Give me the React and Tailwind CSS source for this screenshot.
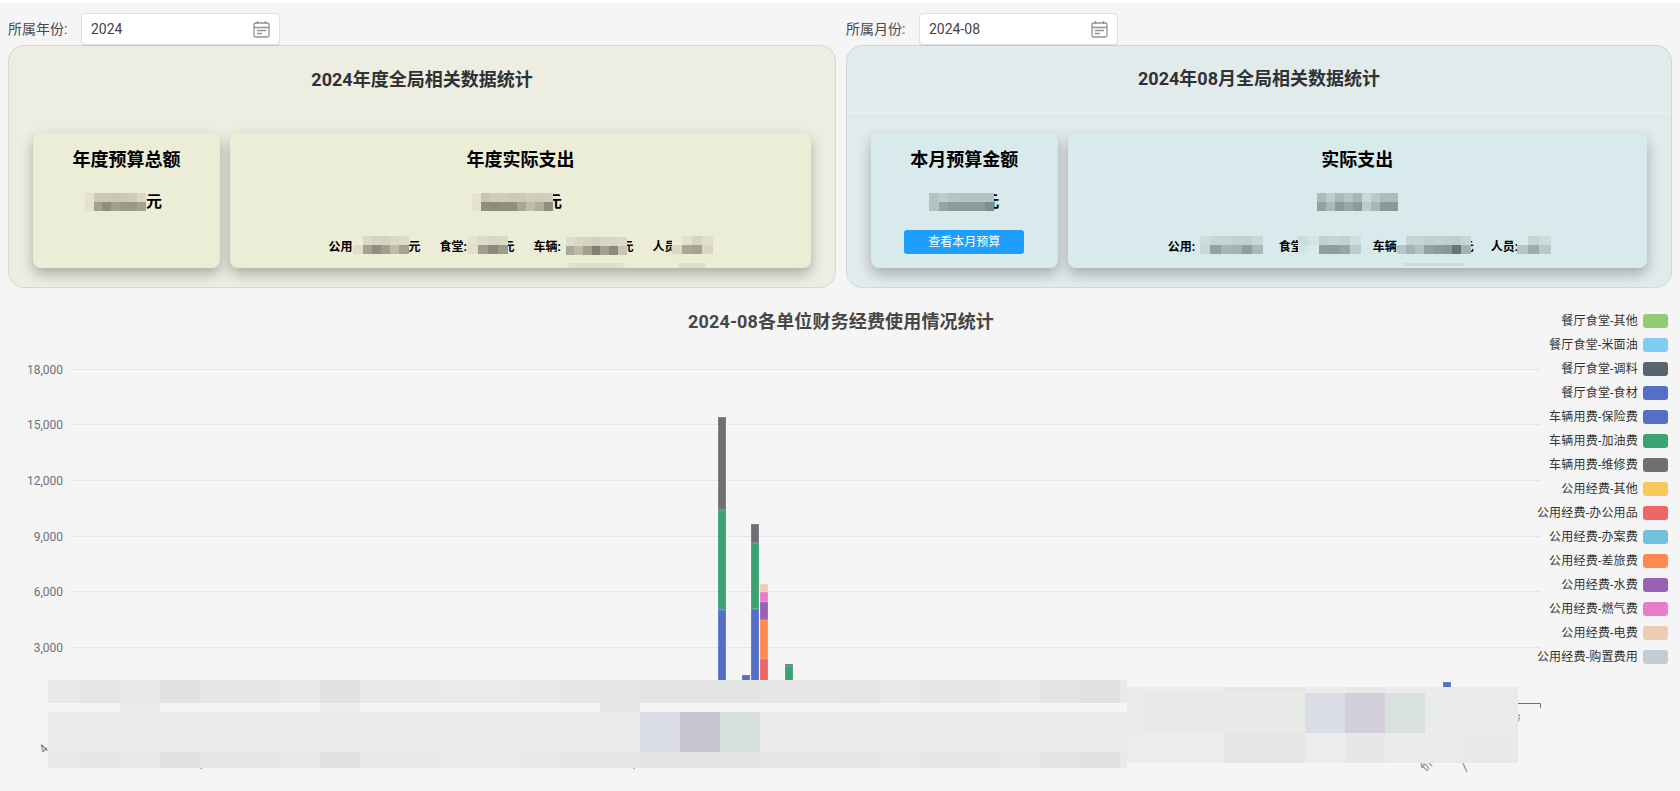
import React from "react";

// echarts legend, top to bottom
const legend = [
  { name: "餐厅食堂-其他", color: "bg-[#91cc75]" },
  { name: "餐厅食堂-米面油", color: "bg-[#7fcdf5]" },
  { name: "餐厅食堂-调料", color: "bg-[#546570]" },
  { name: "餐厅食堂-食材", color: "bg-[#5470c6]" },
  { name: "车辆用费-保险费", color: "bg-[#5470c6]" },
  { name: "车辆用费-加油费", color: "bg-[#3ba272]" },
  { name: "车辆用费-维修费", color: "bg-[#6e7074]" },
  { name: "公用经费-其他", color: "bg-[#fac858]" },
  { name: "公用经费-办公用品", color: "bg-[#ee6666]" },
  { name: "公用经费-办案费", color: "bg-[#73c0de]" },
  { name: "公用经费-差旅费", color: "bg-[#ff8a50]" },
  { name: "公用经费-水费", color: "bg-[#9a60b4]" },
  { name: "公用经费-燃气费", color: "bg-[#ea7ccc]" },
  { name: "公用经费-电费", color: "bg-[#eeccb4]" },
  { name: "公用经费-购置费用", color: "bg-[#c4ccd3]" },
];

const yTicks = [
  { label: "18,000", y: 81.5 },
  { label: "15,000", y: 136.5 },
  { label: "12,000", y: 192.5 },
  { label: "9,000", y: 248.5 },
  { label: "6,000", y: 303.5 },
  { label: "3,000", y: 359.5 },
];

// stacked bars, y values relative to the chart box
const bars = [
  { x: 718, parts: [[129, 93, "#6e7074"], [222, 100, "#3ba272"], [322, 93, "#5470c6"]] },
  { x: 742, parts: [[387, 28, "#5470c6"]] },
  { x: 751, parts: [[236, 19, "#6e7074"], [255, 66, "#3ba272"], [321, 94, "#5470c6"]] },
  {
    x: 760,
    parts: [
      [296, 8, "#eeccb4"],
      [304, 10, "#ea7ccc"],
      [314, 18, "#9a60b4"],
      [332, 39, "#ff8a50"],
      [371, 44, "#ee6666"],
    ],
  },
  { x: 785, parts: [[376, 2, "#6e7074"], [378, 37, "#3ba272"]] },
  { x: 1443, parts: [[394, 21, "#5470c6"]] },
];

const Mosaic = ({ rows, className = "" }) => (
  <div className={`relative z-10 flex flex-col shrink-0 ${className}`}>
    {rows.map((row, i) => (
      <div key={i} className="flex flex-1">
        {row.map((cell, j) => (
          <div key={j} className={`flex-1 ${cell}`} />
        ))}
      </div>
    ))}
  </div>
);

const CalendarIcon = () => (
  <svg width="17" height="18" viewBox="0 0 17 18" fill="none" stroke="#909399" strokeWidth="1.3">
    <rect x="1" y="3" width="15" height="14" rx="1.5" />
    <path d="M1 7.5h15M4.5 1v3M12.5 1v3M4 10.5h9M4 13.5h5" />
  </svg>
);

const DateField = ({ label, value }) => (
  <div className="flex items-center h-8">
    <label className="w-[73px] text-sm text-[#4a4a4a]">{label}</label>
    <div className="w-[199px] h-8 flex items-center justify-between pl-[9px] pr-[9px] bg-white rounded border border-[#dcdfe6] shadow-[0_1px_1px_rgba(0,0,0,0.06)]">
      <span className="text-sm text-[#444444]">{value}</span>
      <CalendarIcon />
    </div>
  </div>
);

const Card = ({ bg, title, children }) => (
  <div className={`relative h-[135px] rounded-lg flex flex-col items-center pt-[15px] shadow-[0_6px_14px_rgba(0,0,0,0.28)] ${bg}`}>
    <div className="text-lg leading-6 font-bold text-black">{title}</div>
    {children}
  </div>
);

const Amount = ({ children, className = "" }) => (
  <div className={`mt-[18px] h-6 flex items-center text-base font-bold text-black ${className}`}>{children}</div>
);

const SubRow = ({ children, className = "" }) => (
  <div className={`mt-[25px] h-4 flex items-center text-xs font-bold text-black ${className}`}>{children}</div>
);

const SubItem = ({ label, labelClass, rows, mosaicClass, className = "" }) => (
  <div className={`flex items-center ${className}`}>
    <span className={`whitespace-nowrap ${labelClass}`}>{label}</span>
    <Mosaic rows={rows} className={`h-[18px] -translate-y-[2px] ${mosaicClass}`} />
  </div>
);

const Panel = ({ bg, title, divider = "", children }) => (
  <div className={`h-[243px] rounded-2xl border border-[#d5d7d3] ${bg}`}>
    <div className={`h-[67px] flex items-center justify-center text-lg font-bold text-[#303133] ${divider}`}>{title}</div>
    <div className="px-6 pt-5">
      <div className="flex -mx-[5px]">{children}</div>
    </div>
  </div>
);

// pixelated cover over the x axis labels
const coverTop = [
  ["w-[32px]", "bg-[#e9e9e9]"], ["w-[40px]", "bg-[#e5e5e5]"], ["w-[40px]", "bg-[#e6e9e7]"], ["w-[40px]", "bg-[#e2e2e3]"],
  ["w-[80px]", "bg-[#e6e6e6]"], ["w-[40px]", "bg-[#e9e9e9]"], ["w-[40px]", "bg-[#e1e2e3]"], ["w-[80px]", "bg-[#e9e9e9]"],
  ["w-[80px]", "bg-[#eaeaea]"], ["w-[40px]", "bg-[#e8e8e8]"], ["w-[80px]", "bg-[#e6e6e6]"], ["w-[120px]", "bg-[#e4e4e5]"],
  ["w-[80px]", "bg-[#e7e7e7]"], ["w-[40px]", "bg-[#e5e5e5]"], ["w-[40px]", "bg-[#e8e8e8]"], ["w-[80px]", "bg-[#e6e6e6]"],
  ["w-[40px]", "bg-[#e9e9e9]"], ["w-[40px]", "bg-[#e4e4e4]"], ["w-[40px]", "bg-[#e1e1e2]"], ["w-[7px]", "bg-[#e9e9e9]"],
];
const coverGap = [
  ["w-[72px]", "bg-[#f4f4f4]"], ["w-[40px]", "bg-[#eaeaea]"], ["w-[160px]", "bg-[#f4f4f4]"], ["w-[40px]", "bg-[#eeeeee]"],
  ["w-[240px]", "bg-[#f5f5f5]"], ["w-[40px]", "bg-[#e6e6e6]"], ["w-[487px]", "bg-[#f5f5f5]"],
];
const coverMid = [
  ["w-[112px]", "bg-[#ebebeb]"], ["w-[400px]", "bg-[#eaeaea]"], ["w-[80px]", "bg-[#eaece9]"],
  ["w-[40px]", "bg-[#d9dce7]"], ["w-[40px]", "bg-[#cac5d3]"], ["w-[40px]", "bg-[#d7e1dc]"], ["w-[120px]", "bg-[#eaeaea]"],
  ["w-[40px]", "bg-[#eaece9]"], ["w-[207px]", "bg-[#ebebeb]"],
];
const rightTop = [
  ["w-[97px]", "bg-[#ececec]"], ["w-[81px]", "bg-[#e6e6e6]"], ["w-[40px]", "bg-[#ececec]"], ["w-[40px]", "bg-[#e8e8e8]"],
  ["w-[133px]", "bg-[#ebebeb]"],
];
const rightMid = [
  ["w-[17px]", "bg-[#ebebeb]"], ["w-[80px]", "bg-[#e8e8e8]"], ["w-[81px]", "bg-[#e8eae8]"], ["w-[40px]", "bg-[#dadde6]"],
  ["w-[40px]", "bg-[#d2cfdb]"], ["w-[40px]", "bg-[#d8e1dd]"], ["w-[40px]", "bg-[#eaecea]"], ["w-[53px]", "bg-[#ebebeb]"],
];
const rightBottom = [
  ["w-[97px]", "bg-[#ececec]"], ["w-[81px]", "bg-[#e5e5e5]"], ["w-[40px]", "bg-[#ececec]"], ["w-[40px]", "bg-[#e7e7e7]"],
  ["w-[80px]", "bg-[#eaeaea]"], ["w-[53px]", "bg-[#e9e9e9]"],
];

const CoverRow = ({ cells, className }) => (
  <div className={`flex ${className}`}>
    {cells.map(([w, bg], i) => (
      <div key={i} className={`${w} ${bg}`} />
    ))}
  </div>
);

const Chart = () => (
  <div className="relative h-[503px]">
    <svg width="1680" height="503" className="block">
      <text x="841" y="40" textAnchor="middle" fontSize="18" fontWeight="bold" fill="#464646" letterSpacing="0.15">
        2024-08各单位财务经费使用情况统计
      </text>
      {yTicks.map((t) => (
        <g key={t.label}>
          <line x1="71" x2="1540" y1={t.y} y2={t.y} stroke="#e0e6f1" />
          <text x="63" y={t.y + 4} textAnchor="end" fontSize="12" fill="#6e7079">
            {t.label}
          </text>
        </g>
      ))}
      <path d="M71 415.5H1540.5V420" fill="none" stroke="#6e7079" />
      {bars.map((b) =>
        b.parts.map(([y, h, fill]) => (
          <rect key={`${b.x}-${y}`} x={b.x} y={y} width="8" height={h} fill={fill} stroke="#ffffff" strokeOpacity="0.2" />
        ))
      )}
      {/* tails of the rotated axis labels that stick out of the cover */}
      <text transform="translate(44 466) rotate(-45)" fontSize="12" fill="#6e7079">4</text>
      <text transform="translate(1514 437) rotate(-45)" fontSize="12" fill="#6e7079">参</text>
      <text transform="translate(1425 484) rotate(-45)" fontSize="12" fill="#6e7079">价</text>
      <text transform="translate(1466 484) rotate(-45)" fontSize="12" fill="#6e7079">/</text>
      <path d="M201 479v2M634 479v2" stroke="#6e7079" />
    </svg>

    <div className="absolute top-[26px] right-[12px] flex flex-col items-end gap-[10px]">
      {legend.map((item) => (
        <div key={item.name} className="flex items-center h-[14px] gap-[5px] text-xs tracking-[0.2px] text-[#333333]">
          <span>{item.name}</span>
          <span className={`w-[25px] h-[14px] rounded-[3px] ${item.color}`} />
        </div>
      ))}
    </div>

    <div className="absolute left-[48px] top-[392px] w-[1079px]">
      <CoverRow cells={coverTop} className="h-[23px]" />
      <CoverRow cells={coverGap} className="h-[9px]" />
      <CoverRow cells={coverMid} className="h-[40px]" />
      <CoverRow cells={coverTop} className="h-[16px]" />
    </div>
    <div className="absolute left-[1127px] top-[399px] w-[391px]">
      <CoverRow cells={rightTop} className="h-[6px]" />
      <CoverRow cells={rightMid} className="h-[40px]" />
      <CoverRow cells={rightBottom} className="h-[30px]" />
    </div>
  </div>
);

export default function App() {
  return (
    <div className="h-screen overflow-hidden border-t-[3px] border-white bg-[#f5f5f5] font-[Roboto,'Noto_Sans_CJK_SC',sans-serif]">
      <div className="grid grid-cols-[828px_826px] gap-[10px] px-2 pt-[10px]">
        <div>
          <DateField label="所属年份:" value="2024" />
          <Panel bg="bg-[#edede2]" title="2024年度全局相关数据统计">
            <div className="w-1/4 px-[5px]">
              <Card bg="bg-[#ecedd7]" title="年度预算总额">
                <Amount className="-ml-[6px]">
                  <Mosaic
                    className="w-[61px] h-[18px]"
                    rows={[
                      ["bg-[#e2e2cf]", "bg-[#cacab6]", "bg-[#c9c9b5]", "bg-[#c8c8b4]", "bg-[#cacab6]", "bg-[#cdcdba]", "bg-[#d9d9c5]"],
                      ["bg-[#e2e2cf]", "bg-[#a3a394]", "bg-[#8f8f80]", "bg-[#a0a090]", "bg-[#9a9a8b]", "bg-[#9a9a8b]", "bg-[#a2a292]"],
                    ]}
                  />
                  <span>元</span>
                </Amount>
              </Card>
            </div>
            <div className="w-3/4 px-[5px]">
              <Card bg="bg-[#ecedd7]" title="年度实际支出">
                <Amount className="-ml-[7px]">
                  <Mosaic
                    className="w-[81px] h-[18px]"
                    rows={[
                      ["bg-[#e4e4d1]", "bg-[#c6c6b2]", "bg-[#cdcdb9]", "bg-[#cdcdb9]", "bg-[#cacab6]", "bg-[#cbcbb7]", "bg-[#cfcfbb]", "bg-[#cdcdb9]", "bg-[#d0d0bc]"],
                      ["bg-[#e4e4d1]", "bg-[#8f8f80]", "bg-[#8b8b7d]", "bg-[#8f8f80]", "bg-[#8f8f80]", "bg-[#a8a898]", "bg-[#bdbdaa]", "bg-[#adad9c]", "bg-[#8d8d7e]"],
                    ]}
                  />
                  <span className="-ml-[7px]">元</span>
                </Amount>
                <SubRow className="gap-[19px]">
                  <SubItem
                    label="公用"
                    labelClass="w-[25px]"
                    mosaicClass="w-[55px]"
                    rows={[
                      ["bg-[#ecedd7]", "bg-[#dadac6]", "bg-[#d5d5c1]", "bg-[#d3d3bf]", "bg-[#d9d9c5]", "bg-[#dcdcc8]"],
                      ["bg-[#dedecb]", "bg-[#a3a393]", "bg-[#8f8f80]", "bg-[#a0a090]", "bg-[#bcbca9]", "bg-[#a3a393]"],
                    ]}
                  />
                  <span className="-ml-[19px]">元</span>
                  <SubItem
                    label="食堂:"
                    labelClass="w-[28px]"
                    mosaicClass="w-[41px]"
                    rows={[
                      ["bg-[#e3e3d0]", "bg-[#dcdcc8]", "bg-[#d6d6c2]", "bg-[#dadac6]"],
                      ["bg-[#e0e0cc]", "bg-[#9e9e8e]", "bg-[#8b8b7d]", "bg-[#9c9c8c]"],
                    ]}
                  />
                  <span className="-ml-[25px]">元</span>
                  <SubItem
                    label="车辆:"
                    labelClass="w-[32px]"
                    mosaicClass="w-[61px] mt-[2px]"
                    rows={[
                      ["bg-[#dedecb]", "bg-[#d8d8c4]", "bg-[#d4d4c0]", "bg-[#d0d0bc]", "bg-[#d6d6c2]", "bg-[#d6d6c2]", "bg-[#d9d9c5]"],
                      ["bg-[#a9a999]", "bg-[#bbbba8]", "bg-[#a0a090]", "bg-[#7f7f72]", "bg-[#a0a090]", "bg-[#8a8a7c]", "bg-[#c5c5b1]"],
                    ]}
                  />
                  <span className="-ml-[24px]">元</span>
                  <SubItem
                    label="人员"
                    labelClass="w-[19px]"
                    mosaicClass="w-[41px]"
                    rows={[
                      ["bg-[#ecedd7]", "bg-[#e2e2cf]", "bg-[#d5d5c1]", "bg-[#dedecb]"],
                      ["bg-[#d8d8c4]", "bg-[#a9a999]", "bg-[#a3a393]", "bg-[#d6d6c2]"],
                    ]}
                  />
                </SubRow>
                <div className="absolute bottom-0 left-[337px] w-[58px] h-[5px] rounded-b-2xl bg-[#dfdfcc]" />
                <div className="absolute bottom-0 left-[447px] w-[30px] h-[5px] rounded-b-2xl bg-[#dfdfcc]" />
              </Card>
            </div>
          </Panel>
        </div>

        <div>
          <DateField label="所属月份:" value="2024-08" />
          <Panel bg="bg-[#e2ebec]" divider="border-b border-[#ebf1f2]" title="2024年08月全局相关数据统计">
            <div className="w-1/4 px-[5px]">
              <Card bg="bg-[#d8eaec]" title="本月预算金额">
                <Amount>
                  <Mosaic
                    className="w-[65px] h-[18px]"
                    rows={[
                      ["bg-[#b3c3c3]", "bg-[#bdcccc]", "bg-[#b5c5c5]", "bg-[#b3c3c3]", "bg-[#b3c3c3]", "bg-[#b3c3c3]", "bg-[#b3c3c3]"],
                      ["bg-[#b3c3c3]", "bg-[#95a3a3]", "bg-[#8d9a9a]", "bg-[#8d9a9a]", "bg-[#8d9a9a]", "bg-[#8d9a9a]", "bg-[#7f8c8c]"],
                    ]}
                  />
                  <span className="-ml-[11px]">元</span>
                </Amount>
                <button className="mt-4 w-[120px] h-6 rounded-[3px] bg-[#1e9fff] text-xs text-white">查看本月预算</button>
              </Card>
            </div>
            <div className="w-3/4 px-[5px]">
              <Card bg="bg-[#d8eaec]" title="实际支出">
                <Amount>
                  <Mosaic
                    className="w-[81px] h-[18px]"
                    rows={[
                      ["bg-[#adbdbd]", "bg-[#bccbcb]", "bg-[#a9b9b9]", "bg-[#b6c6c6]", "bg-[#a7b7b7]", "bg-[#c8d8d9]", "bg-[#b9c9c9]", "bg-[#acbcbc]", "bg-[#acbcbc]"],
                      ["bg-[#93a1a1]", "bg-[#aab9b9]", "bg-[#8c9999]", "bg-[#99a7a7]", "bg-[#8d9a9a]", "bg-[#bccbcb]", "bg-[#a7b6b6]", "bg-[#8b9898]", "bg-[#8b9898]"],
                    ]}
                  />
                </Amount>
                <SubRow className="ml-[4px]">
                  <SubItem
                    label="公用:"
                    labelClass="w-[32px]"
                    mosaicClass="w-[63px]"
                    rows={[
                      ["bg-[#cbdcdd]", "bg-[#c5d6d7]", "bg-[#c5d6d7]", "bg-[#c0d1d2]", "bg-[#bfd0d1]", "bg-[#c8d9da]"],
                      ["bg-[#c6d7d8]", "bg-[#93a1a1]", "bg-[#a6b5b5]", "bg-[#a3b2b2]", "bg-[#8f9d9d]", "bg-[#a9b8b8]"],
                    ]}
                  />
                  <SubItem
                    className="ml-[16px]"
                    label="食堂"
                    labelClass="w-[19px]"
                    mosaicClass="w-[63px]"
                    rows={[
                      ["bg-[#cbdcdd]", "bg-[#d4e4e5]", "bg-[#bfd0d1]", "bg-[#c4d5d6]", "bg-[#c0d1d2]", "bg-[#cfdfe0]"],
                      ["bg-[#d4e4e5]", "bg-[#d8eaec]", "bg-[#8f9d9d]", "bg-[#8e9c9c]", "bg-[#96a4a4]", "bg-[#bccbcb]"],
                    ]}
                  />
                  <SubItem
                    className="ml-[12px]"
                    label="车辆"
                    labelClass="w-[24px]"
                    mosaicClass="w-[74px]"
                    rows={[
                      ["bg-[#d8eaec]", "bg-[#c3d4d5]", "bg-[#c5d6d7]", "bg-[#bfd0d1]", "bg-[#c0d1d2]", "bg-[#bdcece]", "bg-[#bdcece]", "bg-[#c5d6d7]"],
                      ["bg-[#b5c5c5]", "bg-[#a4b3b3]", "bg-[#b3c2c2]", "bg-[#93a1a1]", "bg-[#8d9a9a]", "bg-[#8a9797]", "bg-[#697575]", "bg-[#a4b3b3]"],
                    ]}
                  />
                  <span className="-ml-[9px]">元</span>
                  <SubItem
                    className="ml-[17px]"
                    label="人员:"
                    labelClass="w-[26px]"
                    mosaicClass="w-[34px]"
                    rows={[
                      ["bg-[#d8eaec]", "bg-[#c5d6d7]", "bg-[#cbdcdd]"],
                      ["bg-[#b5c5c5]", "bg-[#9dabab]", "bg-[#b9c9c9]"],
                    ]}
                  />
                </SubRow>
                <div className="absolute bottom-[2px] left-[335px] w-[62px] h-[3px] rounded-b-lg bg-[#cbdcdd]" />
              </Card>
            </div>
          </Panel>
        </div>
      </div>
      <Chart />
    </div>
  );
}
